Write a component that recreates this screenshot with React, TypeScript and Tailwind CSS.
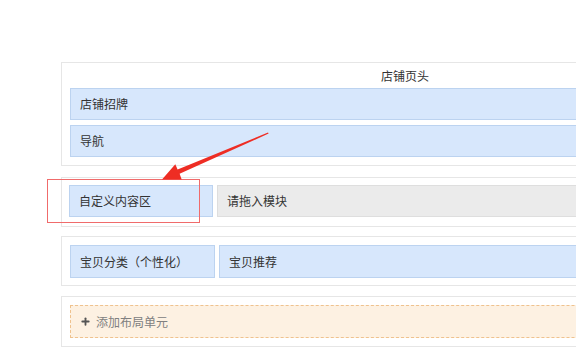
import { Plus } from 'lucide-react'

function Cell({ label, gray, className = '' }: { label: string; gray?: boolean; className?: string }) {
  return (
    <div
      className={`flex items-center pl-[9px] border text-[12px] text-[#333] ${
        gray ? 'bg-[#ebebeb] border-[#dedede]' : 'bg-[#d7e7fc] border-[#bcd3f0]'
      } ${className}`}
    >
      {label}
    </div>
  )
}

export default function App() {
  return (
    <div className="relative w-[576px] h-[356px] overflow-hidden bg-white font-['Noto_Sans_CJK_SC','Noto_Sans',sans-serif]">
      <div className="flex flex-col pt-[62px] pl-[61px]">
        <div className="w-[688px] border border-[#e6e6e6] px-[8px] pb-[8px]">
          <div className="h-[25px] flex items-center justify-center text-[12px] text-[#333]">店铺页头</div>
          <div className="flex flex-col gap-[5px]">
            <Cell label="店铺招牌" className="h-[32px]" />
            <Cell label="导航" className="h-[32px]" />
          </div>
        </div>

        <div className="mt-[11px] w-[688px] border border-[#e6e6e6] pt-[7px] pb-[9px] px-[7px] flex gap-[4px]">
          <Cell label="自定义内容区" className="h-[32px] w-[144px] shrink-0" />
          <Cell label="请拖入模块" gray className="h-[32px] flex-1" />
        </div>

        <div className="mt-[9px] w-[688px] border border-[#e6e6e6] pt-[8px] pb-[7px] px-[8px] flex gap-[4px]">
          <Cell label="宝贝分类（个性化）" className="h-[33px] w-[145px] shrink-0" />
          <Cell label="宝贝推荐" className="h-[33px] flex-1" />
        </div>

        <div className="mt-[10px] w-[688px] border border-[#e6e6e6] p-[8px]">
          <div className="h-[33px] flex items-center gap-[5px] pl-[9px] bg-[#fdf1e2] border border-dashed border-[#efc28e] text-[12px] text-[#808080]">
            <Plus size={11} strokeWidth={4} className="text-[#555]" />
            添加布局单元
          </div>
        </div>
      </div>

      <div className="absolute left-[47px] top-[179px] w-[153px] h-[44px] border border-[#f06b6b]" />

      <svg className="absolute left-0 top-0" width="576" height="356" viewBox="0 0 576 356">
        <polygon
          points="268,132.5 268.6,133.6 179.6,173.7 181.7,179.6 162,179.5 175.3,164.2 177.6,169.6"
          fill="#ee2d24"
        />
      </svg>
    </div>
  )
}
